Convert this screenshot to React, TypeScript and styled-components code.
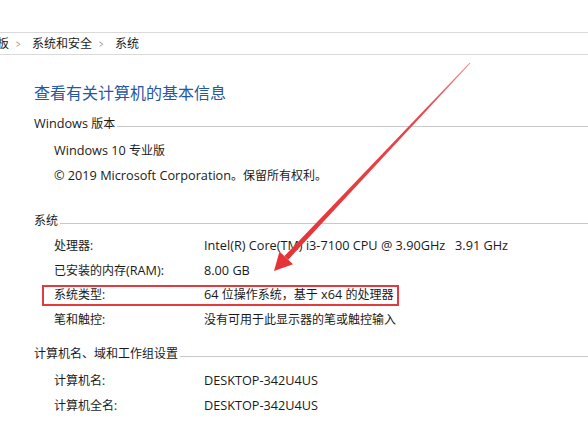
import React from "react";
import styled, { createGlobalStyle } from "styled-components";

const GlobalStyle = createGlobalStyle`
  body {
    margin: 0;
    background: #ffffff;
    font-family: "Open Sans", "Noto Sans CJK SC", sans-serif;
    color: #1a1a1a;
    overflow: hidden;
  }
`;

const Page = styled.div`
  position: relative;
  width: 588px;
  height: 423px;
  padding-top: 32px;
  box-sizing: border-box;
  overflow: hidden;
`;

const Breadcrumb = styled.div`
  display: flex;
  align-items: center;
  height: 21px;
  border-top: 1px solid #dadada;
  border-bottom: 1px solid #dadada;
  font-size: 12px;
  margin-left: -3px;
`;

const Crumb = styled.span`
  color: #1a1a1a;
  line-height: 21px;
`;

const Chevron = styled.span`
  color: #8a8a8a;
  font-size: 11px;
  width: 6px;
  margin: 0 11px 0 6px;
  text-align: center;
  transform: scaleX(0.7);
`;

const Content = styled.div`
  padding-left: 34px;
`;

const Title = styled.h1`
  margin: 26px 0 0;
  font-family: "Noto Sans CJK SC", sans-serif;
  font-size: 16px;
  font-weight: normal;
  color: #2657a3;
  line-height: 22px;
`;

const SectionHead = styled.div<{ $top: number }>`
  display: flex;
  align-items: center;
  margin-top: ${(p) => p.$top}px;
  font-size: 12px;
  line-height: 20px;
  &::after {
    content: "";
    flex: 1;
    border-top: 1px solid #c9c9c9;
    margin-left: 2px;
    margin-top: 4px;
  }
`;

const Block = styled.div<{ $top: number }>`
  margin-top: ${(p) => p.$top}px;
  padding-left: 20px;
`;

const Line = styled.div`
  font-size: 12px;
  line-height: 25px;
  white-space: pre;
`;

const Row = styled.div<{ $mark?: boolean }>`
  position: relative;
  display: grid;
  grid-template-columns: 150px auto;
  width: fit-content;
  font-size: 12px;
  line-height: 24.5px;
  white-space: pre;
  &::after {
    content: "";
    display: ${(p) => (p.$mark ? "block" : "none")};
    position: absolute;
    left: -12px;
    right: -5px;
    top: 2px;
    bottom: 2px;
    border: 2.5px solid #e23b3e;
  }
`;

// latin runs are a bit wider in the original ui font
const Latin = styled.span`
  font-size: 12.7px;
  line-height: 1;
`;

const Arrow = styled.svg`
  position: absolute;
  left: 0;
  top: 0;
  pointer-events: none;
`;

const Txt = ({ children }: { children: string }) => {
  const parts = children.split(/([\x20-\x7e©]+)/).filter((s) => s !== "");
  return (
    <span>
      {parts.map((p, i) =>
        /[A-Za-z0-9]/.test(p) ? <Latin key={i}>{p}</Latin> : <React.Fragment key={i}>{p}</React.Fragment>
      )}
    </span>
  );
};

const systemRows = [
  { label: "处理器:", value: "Intel(R) Core(TM) i3-7100 CPU @ 3.90GHz   3.91 GHz" },
  { label: "已安装的内存(RAM):", value: "8.00 GB" },
  { label: "系统类型:", value: "64 位操作系统，基于 x64 的处理器", mark: true },
  { label: "笔和触控:", value: "没有可用于此显示器的笔或触控输入" },
];

const nameRows = [
  { label: "计算机名:", value: "DESKTOP-342U4US" },
  { label: "计算机全名:", value: "DESKTOP-342U4US" },
];

export default function App() {
  return (
    <Page>
      <GlobalStyle />
      <Breadcrumb>
        <Crumb>板</Crumb>
        <Chevron>&gt;</Chevron>
        <Crumb>系统和安全</Crumb>
        <Chevron>&gt;</Chevron>
        <Crumb>系统</Crumb>
      </Breadcrumb>
      <Content>
        <Title>查看有关计算机的基本信息</Title>
        <SectionHead $top={11}>
          <Txt>Windows 版本</Txt>
        </SectionHead>
        <Block $top={4}>
          <Line>
            <Txt>Windows 10 专业版</Txt>
          </Line>
          <Line>
            <Txt>© 2019 Microsoft Corporation。保留所有权利。</Txt>
          </Line>
        </Block>
        <SectionHead $top={23}>系统</SectionHead>
        <Block $top={3}>
          {systemRows.map((r) => (
            <Row key={r.label} $mark={r.mark}>
              <Txt>{r.label}</Txt>
              <Txt>{r.value}</Txt>
            </Row>
          ))}
        </Block>
        <SectionHead $top={12}>计算机名、域和工作组设置</SectionHead>
        <Block $top={5}>
          {nameRows.map((r) => (
            <Row key={r.label}>
              <Txt>{r.label}</Txt>
              <Txt>{r.value}</Txt>
            </Row>
          ))}
        </Block>
      </Content>
      <Arrow width="588" height="423" viewBox="0 0 588 423">
        <defs>
          <linearGradient id="shaft" x1="470" y1="63" x2="286" y2="258" gradientUnits="userSpaceOnUse">
            <stop offset="0" stopColor="#f08a8c" />
            <stop offset="0.25" stopColor="#e6474b" />
            <stop offset="1" stopColor="#e53338" />
          </linearGradient>
        </defs>
        <polygon
          points="470.4,63.3 469.6,62.7 284.4,256.1 288.2,259.7"
          fill="url(#shaft)"
        />
        <polygon points="274,271 279.5,251.5 293,264.3" fill="#e53338" />
      </Arrow>
    </Page>
  );
}
